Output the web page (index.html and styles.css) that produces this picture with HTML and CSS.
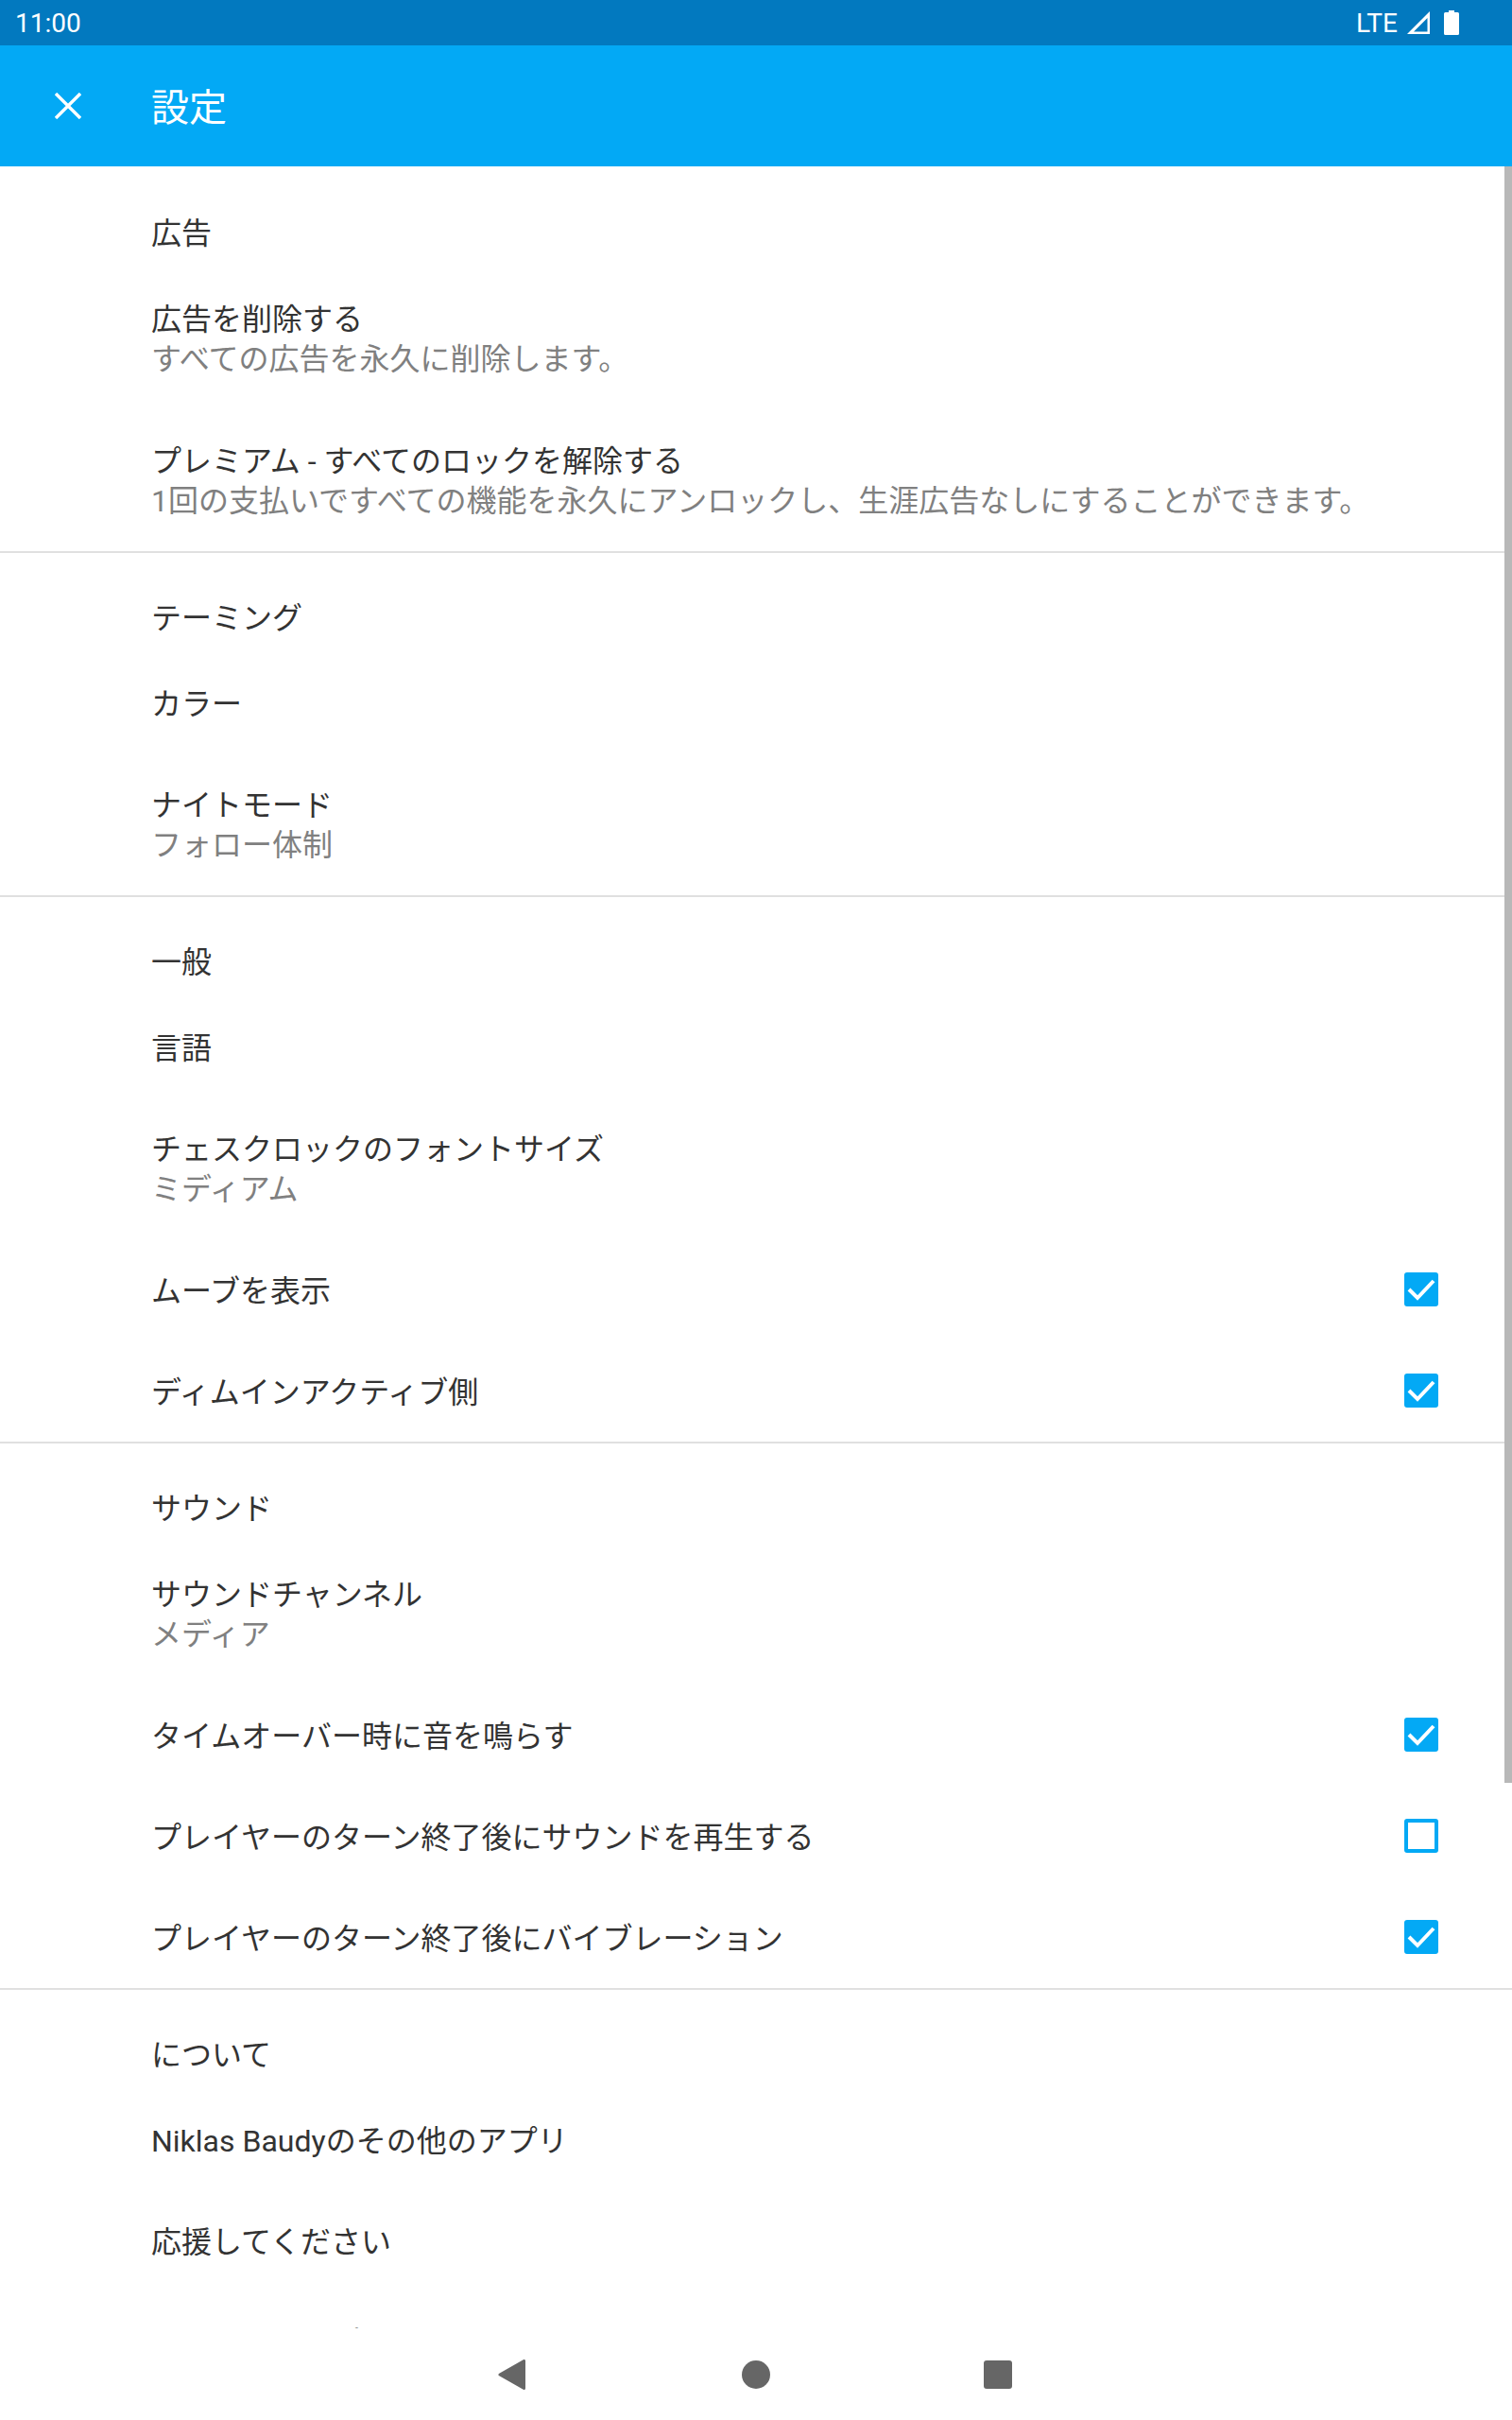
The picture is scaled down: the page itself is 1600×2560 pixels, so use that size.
FILE: index.html
```html
<!DOCTYPE html>
<html lang="ja">
<head>
    <meta charset="UTF-8">
    <meta name="viewport" content="width=device-width, initial-scale=1.0">
    <title>設定</title>
    <link rel="stylesheet" href="styles.css">
</head>
<body>
    <div class="status-bar">
        <span class="clock">11:00</span>
        <div class="status-icons">
            <span class="lte">LTE</span>
            <svg width="26" height="26" viewBox="0 0 26 26"><path d="M1 25 L25 1 V25 Z M8 22.500 H22.500 V8 Z" fill="#fff" fill-rule="evenodd"/></svg>
            <svg class="battery" width="16" height="26" viewBox="0 0 16 26"><path d="M5 0 H11 V2 H14.5 Q16 2 16 3.5 V24.500 Q16 26 14.500 26 H1.500 Q0 26 0 24.500 V3.500 Q0 2 1.500 2 H5 Z" fill="#fff"/></svg>
        </div>
    </div>
    <header class="toolbar">
        <svg class="close-icon" width="28" height="28" viewBox="0 0 28 28"><path d="M1 1 L27 27 M27 1 L1 27" stroke="#fff" stroke-width="3.4" fill="none"/></svg>
        <h1>設定</h1>
    </header>
    <main class="settings">
        <section class="group">
            <h2>広告</h2>
            <div class="row two-line">
                <div class="row-text"><p class="title">広告を削除する</p><p class="sub">すべての広告を永久に削除します。</p></div>
            </div>
            <div class="row two-line">
                <div class="row-text"><p class="title">プレミアム - すべてのロックを解除する</p><p class="sub">1回の支払いですべての機能を永久にアンロックし、生涯広告なしにすることができます。</p></div>
            </div>
        </section>
        <section class="group">
            <h2>テーミング</h2>
            <div class="row"><div class="row-text"><p class="title">カラー</p></div></div>
            <div class="row two-line">
                <div class="row-text"><p class="title">ナイトモード</p><p class="sub">フォロー体制</p></div>
            </div>
        </section>
        <section class="group">
            <h2>一般</h2>
            <div class="row"><div class="row-text"><p class="title">言語</p></div></div>
            <div class="row two-line">
                <div class="row-text"><p class="title">チェスクロックのフォントサイズ</p><p class="sub">ミディアム</p></div>
            </div>
            <div class="row">
                <div class="row-text"><p class="title">ムーブを表示</p></div>
                <span class="check on"><svg width="36" height="36" viewBox="0 0 36 36"><path d="M5 18 L14 27 L31 9" stroke="#fff" stroke-width="4" fill="none"/></svg></span>
            </div>
            <div class="row">
                <div class="row-text"><p class="title">ディムインアクティブ側</p></div>
                <span class="check on"><svg width="36" height="36" viewBox="0 0 36 36"><path d="M5 18 L14 27 L31 9" stroke="#fff" stroke-width="4" fill="none"/></svg></span>
            </div>
        </section>
        <section class="group">
            <h2>サウンド</h2>
            <div class="row two-line">
                <div class="row-text"><p class="title">サウンドチャンネル</p><p class="sub">メディア</p></div>
            </div>
            <div class="row">
                <div class="row-text"><p class="title">タイムオーバー時に音を鳴らす</p></div>
                <span class="check on"><svg width="36" height="36" viewBox="0 0 36 36"><path d="M5 18 L14 27 L31 9" stroke="#fff" stroke-width="4" fill="none"/></svg></span>
            </div>
            <div class="row">
                <div class="row-text"><p class="title">プレイヤーのターン終了後にサウンドを再生する</p></div>
                <span class="check"></span>
            </div>
            <div class="row">
                <div class="row-text"><p class="title">プレイヤーのターン終了後にバイブレーション</p></div>
                <span class="check on"><svg width="36" height="36" viewBox="0 0 36 36"><path d="M5 18 L14 27 L31 9" stroke="#fff" stroke-width="4" fill="none"/></svg></span>
            </div>
        </section>
        <section class="group">
            <h2>について</h2>
            <div class="row"><div class="row-text"><p class="title">Niklas Baudyのその他のアプリ</p></div></div>
            <div class="row"><div class="row-text"><p class="title">応援してください</p></div></div>
            <div class="row"><div class="row-text"><p class="title">プライバシーポリシー</p></div></div>
        </section>
        <div class="scrollbar"></div>
    </main>
    <nav class="nav-bar">
        <svg class="nav-back" width="32" height="32" viewBox="0 0 32 32"><path d="M27.500 1.500 V30.500 L2 16 Z" fill="#666" stroke="#666" stroke-width="3" stroke-linejoin="round"/></svg>
        <span class="nav-dot"></span>
        <span class="nav-square"></span>
    </nav>
</body>
</html>
```

FILE: styles.css
```css
* {
    box-sizing: border-box;
}
body {
    margin: 0;
    height: 2560px;
    overflow: hidden;
    background: #fff;
    color: #333;
    font-family: Roboto, "Noto Sans CJK JP", sans-serif;
    display: flex;
    flex-direction: column;
}
.status-bar {
    height: 48px;
    flex: none;
    background: #0279bf;
    color: #fff;
    display: flex;
    align-items: center;
    justify-content: space-between;
    padding: 0 56px 0 16px;
    font-size: 28px;
}
.status-icons {
    display: flex;
    align-items: center;
    gap: 9px;
}
.lte {
    font-size: 28px;
}
.battery {
    margin-left: 5px;
}
.toolbar {
    height: 128px;
    flex: none;
    background: #03a9f5;
    display: flex;
    align-items: center;
    padding-left: 58px;
}
.toolbar h1 {
    margin: -2px 0 0 74px;
    font-size: 40px;
    font-weight: 400;
    color: #fff;
}
.settings {
    position: relative;
    height: 2287px;
    flex: none;
    overflow: hidden;
}
.scrollbar {
    position: absolute;
    top: 0;
    right: 0;
    width: 8px;
    height: 1710px;
    background: #b8b8b8;
}
.group {
    border-bottom: 2px solid #e0e0e0;
}
.group:first-of-type {
    padding-top: 2px;
}
.group:last-of-type {
    border-bottom: 0;
}
.group h2 {
    margin: 0;
    height: 105px;
    padding: 47px 0 0 160px;
    font-size: 32px;
    line-height: 44px;
    font-weight: 400;
}
.row {
    height: 107px;
    display: flex;
    align-items: center;
    justify-content: space-between;
    padding: 0 78px 0 160px;
}
.two-line {
    height: 150px;
}
.row-text {
    padding-top: 2px;
}
.row-text p {
    margin: 0;
    font-size: 32px;
    line-height: 42px;
}
.row-text .sub {
    color: #808080;
}
.check {
    width: 36px;
    height: 36px;
    margin-top: -1px;
    border: 4px solid #03a9f5;
    border-radius: 3px;
    position: relative;
}
.check.on {
    background: #03a9f5;
}
.check svg {
    position: absolute;
    top: -4px;
    left: -4px;
}
.nav-bar {
    flex: 1;
    background: #fff;
    display: flex;
    align-items: center;
    justify-content: center;
    gap: 226px;
}
.nav-back {
    margin-left: -2px;
}
.nav-dot {
    width: 30px;
    height: 30px;
    border-radius: 50%;
    background: #666;
}
.nav-square {
    width: 30px;
    height: 30px;
    border-radius: 3px;
    background: #666;
}
```
